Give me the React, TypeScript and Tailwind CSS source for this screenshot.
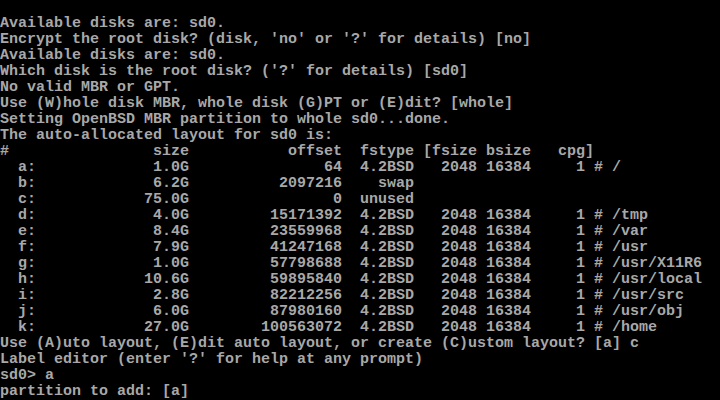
type Part = {
  id: string;
  size: string;
  offset: string;
  fstype: string;
  mount?: string;
};

const parts: Part[] = [
  { id: "a", size: "1.0G", offset: "64", fstype: "4.2BSD", mount: "/" },
  { id: "b", size: "6.2G", offset: "2097216", fstype: "swap" },
  { id: "c", size: "75.0G", offset: "0", fstype: "unused" },
  { id: "d", size: "4.0G", offset: "15171392", fstype: "4.2BSD", mount: "/tmp" },
  { id: "e", size: "8.4G", offset: "23559968", fstype: "4.2BSD", mount: "/var" },
  { id: "f", size: "7.9G", offset: "41247168", fstype: "4.2BSD", mount: "/usr" },
  { id: "g", size: "1.0G", offset: "57798688", fstype: "4.2BSD", mount: "/usr/X11R6" },
  { id: "h", size: "10.6G", offset: "59895840", fstype: "4.2BSD", mount: "/usr/local" },
  { id: "i", size: "2.8G", offset: "82212256", fstype: "4.2BSD", mount: "/usr/src" },
  { id: "j", size: "6.0G", offset: "87980160", fstype: "4.2BSD", mount: "/usr/obj" },
  { id: "k", size: "27.0G", offset: "100563072", fstype: "4.2BSD", mount: "/home" },
];

function row(p: Part) {
  let line =
    "  " + p.id + ": " + p.size.padStart(16) + " " + p.offset.padStart(16) + " " + p.fstype.padStart(7);
  if (p.mount) {
    line += " " + "2048".padStart(6) + " " + "16384".padStart(5) + " " + "1".padStart(5) + " # " + p.mount;
  }
  return line;
}

const lines: string[] = [
  "",
  "Available disks are: sd0.",
  "Encrypt the root disk? (disk, 'no' or '?' for details) [no]",
  "Available disks are: sd0.",
  "Which disk is the root disk? ('?' for details) [sd0]",
  "No valid MBR or GPT.",
  "Use (W)hole disk MBR, whole disk (G)PT or (E)dit? [whole]",
  "Setting OpenBSD MBR partition to whole sd0...done.",
  "The auto-allocated layout for sd0 is:",
  "#                size           offset  fstype [fsize bsize   cpg]",
  ...parts.map(row),
  "Use (A)uto layout, (E)dit auto layout, or create (C)ustom layout? [a] c",
  "Label editor (enter '?' for help at any prompt)",
  "sd0> a",
  "partition to add: [a]",
];

export default function App() {
  return (
    <div className="h-[400px] w-[720px] overflow-hidden bg-black font-['Liberation_Mono',monospace] text-[15px] font-bold leading-[16px] text-[#a8a8a8]">
      {lines.map((line, i) => (
        <div key={i} className="h-4 whitespace-pre">
          {line}
        </div>
      ))}
    </div>
  );
}
